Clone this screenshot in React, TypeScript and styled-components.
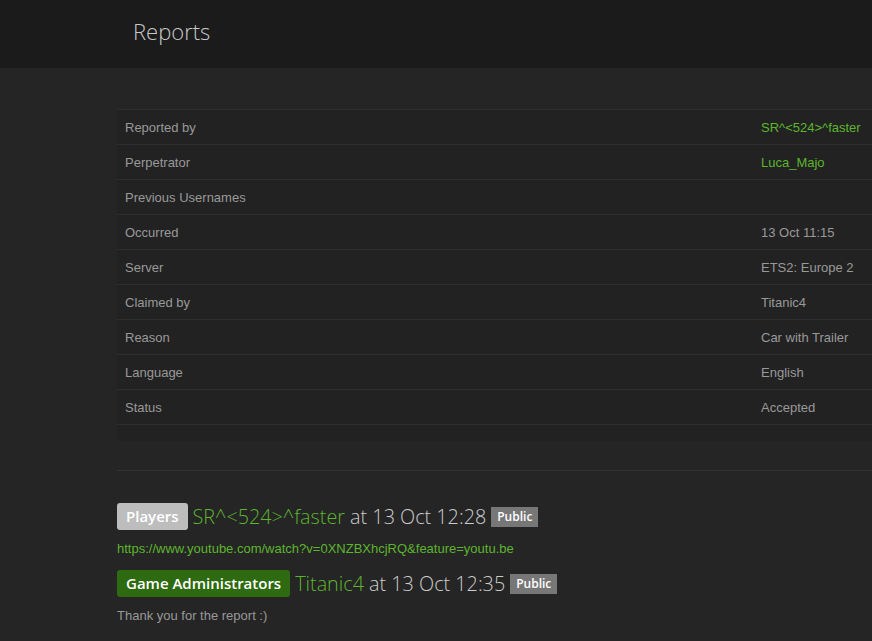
import React from "react";
import styled, { createGlobalStyle } from "styled-components";

const GlobalStyle = createGlobalStyle`
  html, body {
    margin: 0;
    padding: 0;
    background: #252525;
    overflow-x: hidden;
  }
  body {
    font-family: "Liberation Sans", Arial, sans-serif;
  }
`;

const Header = styled.header`
  height: 68px;
  box-sizing: border-box;
  padding: 0 0 6px 133px;
  background: #1b1b1b;
  display: flex;
  align-items: center;
`;

const Title = styled.h1`
  margin: 0;
  font-family: "Open Sans", sans-serif;
  font-weight: 300;
  font-size: 22px;
  color: #c9c9c9;
`;

const Main = styled.main`
  margin-left: 117px;
  width: 900px;
  padding-top: 41px;
`;

const Table = styled.div`
  background: #222222;
  border-top: 1px solid #2e2e2e;
  padding-bottom: 16px;
`;

const Row = styled.div`
  display: grid;
  grid-template-columns: 636px 1fr;
  height: 34px;
  align-items: center;
  border-bottom: 1px solid #2e2e2e;
  font-size: 13px;
`;

const Cell = styled.div<{ $green?: boolean }>`
  padding-left: 8px;
  color: ${(p) => (p.$green ? "#5db52e" : "#999999")};
`;

const Rule = styled.hr`
  margin: 29px 0 0;
  border: 0;
  border-top: 1px solid #333333;
`;

const Comment = styled.section<{ $top: number }>`
  display: flex;
  flex-direction: column;
  align-items: flex-start;
  gap: 11px;
  margin-top: ${(p) => p.$top}px;
`;

const Heading = styled.div`
  display: flex;
  align-items: center;
  gap: 5px;
  font-family: "Open Sans", sans-serif;
  font-weight: 300;
  font-size: 19.8px;
  color: #cccccc;
`;

const Group = styled.span<{ $bg: string }>`
  display: inline-block;
  background: ${(p) => p.$bg};
  color: #ffffff;
  font-family: "Open Sans", sans-serif;
  font-weight: 600;
  font-size: 15px;
  line-height: 27px;
  padding: 0 9px;
  border-radius: 3px;
`;

const Name = styled.span`
  color: #5db52e;
`;

const Public = styled.span`
  display: inline-block;
  background: #777777;
  color: #ffffff;
  font-family: "Open Sans", sans-serif;
  font-weight: 600;
  font-size: 12px;
  line-height: 20px;
  padding: 0 6px;
`;

const Body = styled.p<{ $green?: boolean }>`
  margin: 0;
  font-size: 13px;
  line-height: 16px;
  color: ${(p) => (p.$green ? "#5db52e" : "#999999")};
`;

const rows: [string, string, boolean?][] = [
  ["Reported by", "SR^<524>^faster", true],
  ["Perpetrator", "Luca_Majo", true],
  ["Previous Usernames", ""],
  ["Occurred", "13 Oct 11:15"],
  ["Server", "ETS2: Europe 2"],
  ["Claimed by", "Titanic4"],
  ["Reason", "Car with Trailer"],
  ["Language", "English"],
  ["Status", "Accepted"],
];

export default function App() {
  return (
    <>
      <GlobalStyle />
      <Header>
        <Title>Reports</Title>
      </Header>
      <Main>
        <Table>
          {rows.map(([label, value, green]) => (
            <Row key={label}>
              <Cell>{label}</Cell>
              <Cell $green={green}>{value}</Cell>
            </Row>
          ))}
        </Table>
        <Rule />
        <Comment $top={32}>
          <Heading>
            <Group $bg="#bdbdbd">Players</Group>
            <span>
              <Name>SR^&lt;524&gt;^faster</Name> at 13 Oct 12:28
            </span>
            <Public>Public</Public>
          </Heading>
          <Body $green>
            https://www.youtube.com/watch?v=0XNZBXhcjRQ&amp;feature=youtu.be
          </Body>
        </Comment>
        <Comment $top={13}>
          <Heading>
            <Group $bg="#2d6a10">Game Administrators</Group>
            <span>
              <Name>Titanic4</Name> at 13 Oct 12:35
            </span>
            <Public>Public</Public>
          </Heading>
          <Body>Thank you for the report :)</Body>
        </Comment>
      </Main>
    </>
  );
}
